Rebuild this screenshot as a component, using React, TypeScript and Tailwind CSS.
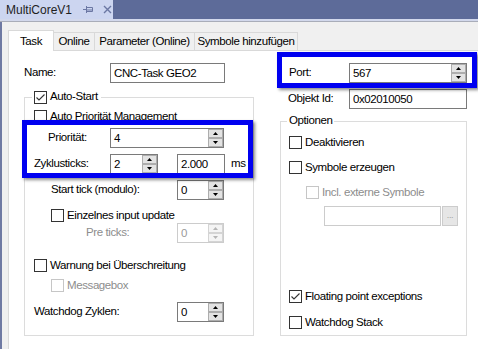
import React from "react";

function Box({ checked = false, disabled = false }: { checked?: boolean; disabled?: boolean }) {
  return (
    <span
      className={`flex h-[13px] w-[13px] shrink-0 items-center justify-center border bg-white ${
        disabled ? "border-[#c6c6c6]" : "border-[#333333]"
      }`}
    >
      {checked && (
        <svg width="11" height="11" viewBox="0 0 11 11">
          <path d="M1.5 5.5 L4 8 L9.5 2.5" fill="none" stroke="#333333" strokeWidth="1.1" />
        </svg>
      )}
    </span>
  );
}

function CheckRow({
  label,
  checked,
  disabled,
  className = "",
}: {
  label: string;
  checked?: boolean;
  disabled?: boolean;
  className?: string;
}) {
  return (
    <div className={`flex h-[13px] items-center ${className}`}>
      <Box checked={checked} disabled={disabled} />
      <span className={`ml-[3px] whitespace-nowrap ${disabled ? "text-[#8d8d8d]" : ""}`}>{label}</span>
    </div>
  );
}

function Arrow({ up, disabled }: { up?: boolean; disabled?: boolean }) {
  return (
    <span
      className={`flex flex-1 items-center justify-center border ${
        disabled ? "border-[#d4d4d4] bg-[#f4f4f4]" : "border-[#adadad] bg-[#e3e3e3]"
      }`}
    >
      <svg width="5" height="3" viewBox="0 0 5 3">
        <path d={up ? "M0 3 L2.5 0 L5 3 Z" : "M0 0 L5 0 L2.5 3 Z"} fill={disabled ? "#b5b5b5" : "#000000"} />
      </svg>
    </span>
  );
}

function Spin({ value, width, disabled }: { value: string; width: string; disabled?: boolean }) {
  return (
    <div
      className={`flex h-[20px] shrink-0 border bg-white ${width} ${
        disabled ? "border-[#cccccc] text-[#9a9a9a]" : "border-[#7a7a7a]"
      }`}
    >
      <span className="flex-1 pl-[3px] leading-[18px]">{value}</span>
      <div className="flex w-[15px] flex-col">
        <Arrow up disabled={disabled} />
        <Arrow disabled={disabled} />
      </div>
    </div>
  );
}

function TextBox({ value, width }: { value: string; width: string }) {
  return (
    <div className={`h-[20px] shrink-0 border border-[#7a7a7a] bg-white pl-[3px] leading-[18px] ${width}`}>
      {value}
    </div>
  );
}

const tabs = ["Online", "Parameter (Online)", "Symbole hinzufügen"];
const tabWidths = ["w-[42px]", "w-[101px]", "w-[104px]"];

export default function App() {
  return (
    <div className="relative h-[349px] w-[478px] overflow-hidden bg-[#f0f0f0] font-['Liberation_Sans',Arial,sans-serif] text-[11.5px] tracking-[-0.4px] text-black">
      {/* document tab title */}
      <div className="flex h-[19px] bg-[#5d6b99]">
        <div className="flex w-[113px] items-center bg-[#ccd5f0] pl-[6px] text-[12px] tracking-normal text-[#1e1e1e]">
          <span>MultiCoreV1</span>
          <svg className="ml-[11px]" width="10" height="9" viewBox="0 0 10 9">
            <path d="M0 4.5 H3 M3.5 1 V8 M3.5 2.5 H9.5 V6.5 H3.5 M3.5 5 H9.5" fill="none" stroke="#6b77a3" strokeWidth="1" />
          </svg>
          <svg className="ml-[10px]" width="9" height="9" viewBox="0 0 9 9">
            <path d="M1 1 L8 8 M8 1 L1 8" stroke="#6b77a3" strokeWidth="1.4" />
          </svg>
        </div>
      </div>
      <div className="h-[2px] bg-[#d2d8ec]" />
      <div className="h-[1px] bg-[#a9adb9]" />

      <div className="flex h-[327px]">
        <div className="w-[2px] bg-[#6f7aa3]" />
        <div className="flex flex-1 flex-col pl-[6px]">
          {/* tab strip */}
          <div className="flex h-[28px] items-end">
            <div className="relative z-10 -mb-px flex h-[21px] w-[46px] items-start justify-center border border-b-0 border-[#d9d9d9] bg-white pt-[2px]">
              Task
            </div>
            {tabs.map((t, i) => (
              <div
                key={t}
                className={`-ml-px flex h-[18px] items-center justify-center border border-b-0 border-[#d9d9d9] bg-[#f0f0f0] ${tabWidths[i]}`}
              >
                {t}
              </div>
            ))}
          </div>

          {/* tab page */}
          <div className="flex flex-1 gap-[26px] border-l border-t border-[#d9d9d9] bg-white pl-[15px] pt-[12px]">
            {/* left column */}
            <div className="flex w-[230px] flex-col">
              <div className="flex h-[20px] items-center">
                <span className="w-[86px]">Name:</span>
                <TextBox value="CNC-Task GEO2" width="w-[115px]" />
              </div>

              <fieldset className="mt-[7px] border border-[#dcdcdc] pb-[13px] pl-[7px]">
                <legend className="flex h-[14px] items-center px-[2px]">
                  <Box checked />
                  <span className="ml-[3px] pr-[1px]">Auto-Start</span>
                </legend>
                <div className="flex flex-col pl-[2px]">
                  <CheckRow label="Auto Priorität Management" className="mt-[6px]" />
                  <div className="mt-[5px] flex items-center">
                    <span className="w-[76px] pl-[14px]">Priorität:</span>
                    <Spin value="4" width="w-[114px]" />
                  </div>
                  <div className="mt-[6px] flex items-center">
                    <span className="w-[76px]">Zyklusticks:</span>
                    <Spin value="2" width="w-[48px]" />
                    <div className="ml-[19px]">
                      <TextBox value="2.000" width="w-[48px]" />
                    </div>
                    <span className="ml-[6px]">ms</span>
                  </div>
                  <div className="mt-[6px] flex items-center">
                    <span className="w-[143px] pl-[17px]">Start tick (modulo):</span>
                    <Spin value="0" width="w-[47px]" />
                  </div>
                  <CheckRow label="Einzelnes input update" className="mt-[9px] pl-[17px]" />
                  <div className="mt-[1px] flex items-center">
                    <span className="w-[143px] pl-[52px] text-[#8d8d8d]">Pre ticks:</span>
                    <Spin value="0" width="w-[47px]" disabled />
                  </div>
                  <CheckRow label="Warnung bei Überschreitung" className="mt-[16px]" />
                  <CheckRow label="Messagebox" disabled className="mt-[7px] pl-[17px]" />
                  <div className="mt-[10px] flex items-center">
                    <span className="w-[143px]">Watchdog Zyklen:</span>
                    <Spin value="0" width="w-[47px]" />
                  </div>
                </div>
              </fieldset>
            </div>

            {/* right column */}
            <div className="flex w-[187px] flex-col">
              <div className="flex h-[20px] items-center">
                <span className="w-[69px] pl-[9px]">Port:</span>
                <Spin value="567" width="w-[118px]" />
              </div>
              <div className="mt-[6px] flex h-[20px] items-center">
                <span className="w-[69px] pl-[8px]">Objekt Id:</span>
                <TextBox value="0x02010050" width="w-[118px]" />
              </div>

              <fieldset className="mt-[5px] border border-[#dcdcdc] pb-[6px] pl-[6px]">
                <legend className="flex h-[14px] items-center px-[2px]">Optionen</legend>
                <div className="flex flex-col pl-[2px]">
                  <CheckRow label="Deaktivieren" className="mt-[8px]" />
                  <CheckRow label="Symbole erzeugen" className="mt-[12px]" />
                  <CheckRow label="Incl. externe Symbole" disabled className="mt-[12px] pl-[17px]" />
                  <div className="mt-[7px] flex pl-[35px]">
                    <div className="h-[20px] w-[117px] border border-[#cccccc] bg-white" />
                    <div className="ml-[1px] flex h-[20px] w-[16px] items-center justify-center border border-[#cccccc] bg-[#e6e6e6] text-[9px] text-[#a0a0a0]">
                      ...
                    </div>
                  </div>
                  <CheckRow label="Floating point exceptions" checked className="mt-[64px]" />
                  <CheckRow label="Watchdog Stack" className="mt-[13px]" />
                </div>
              </fieldset>
            </div>
          </div>
        </div>
      </div>

      {/* highlight frames drawn over the dialog */}
      <div className="absolute left-[22px] top-[120px] h-[58px] w-[231px] border-[5px] border-[#0000f0] shadow-[2px_2px_3px_rgba(0,0,0,0.45)]" />
      <div className="absolute left-[277px] top-[52px] h-[36px] w-[200px] border-[5px] border-[#0000f0] shadow-[2px_2px_3px_rgba(0,0,0,0.45)]" />
    </div>
  );
}
